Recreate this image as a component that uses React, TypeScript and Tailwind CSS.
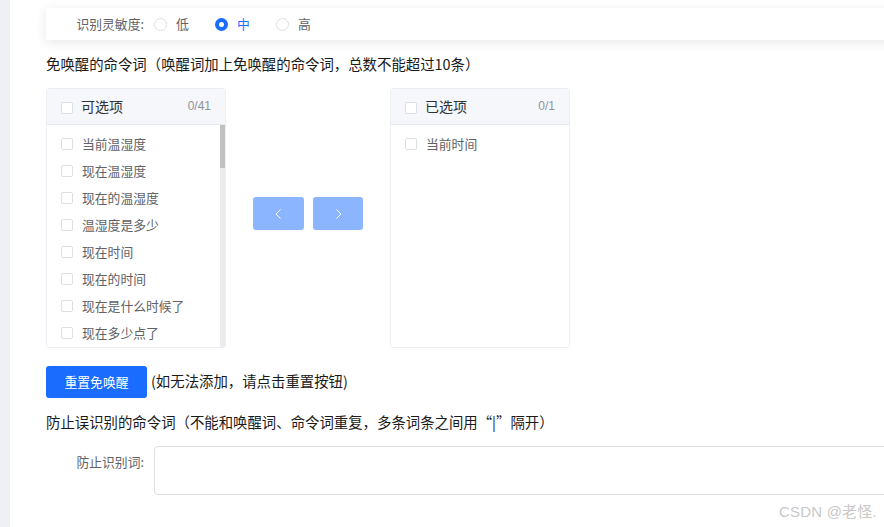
import React from "react";

const items = ["当前温湿度", "现在温湿度", "现在的温湿度", "温湿度是多少", "现在时间", "现在的时间", "现在是什么时候了", "现在多少点了"];

function Box({ className = "" }: { className?: string }) {
  return <span className={`block w-[12px] h-[12px] rounded-[2px] border border-[#dcdfe6] bg-white shrink-0 ${className}`} />;
}

function Radio({ label, on }: { label: string; on?: boolean }) {
  return (
    <div className="flex items-center w-[61px]">
      {on ? (
        <span className="w-[13px] h-[13px] rounded-full border-[4px] border-[#1a6cff] bg-white shrink-0" />
      ) : (
        <span className="w-[13px] h-[13px] rounded-full border border-[#dcdfe6] bg-white shrink-0" />
      )}
      <span className={`ml-[9px] text-[12.8px] ${on ? "text-[#1a6cff]" : "text-[#606266]"}`}>{label}</span>
    </div>
  );
}

function Panel({ title, count, list, scroll }: { title: string; count: string; list: string[]; scroll?: boolean }) {
  return (
    <div className="w-[180px] h-[260px] rounded-[3px] border border-[#ebeef5] bg-white flex flex-col shrink-0 overflow-hidden">
      <div className="h-[36px] shrink-0 bg-[#f5f7fa] border-b border-[#e6e9f0] flex items-center pl-[14px] pr-[14px]">
        <Box className="mt-[2px]" />
        <span className="ml-[8px] text-[14px] text-[#303133] flex-1">{title}</span>
        <span className="text-[12px] text-[#909399] pb-[1px]" style={{ fontFamily: '"Liberation Sans", sans-serif' }}>{count}</span>
      </div>
      <div className="flex-1 flex min-h-0">
        <div className="flex-1 pt-[5px] pl-[14px]">
          {list.map((t) => (
            <div key={t} className="h-[27px] flex items-center">
              <Box />
              <span className="ml-[9px] text-[12.8px] text-[#606266] whitespace-nowrap">{t}</span>
            </div>
          ))}
        </div>
        {scroll && (
          <div className="w-[5px] bg-[#ececec] shrink-0">
            <div className="h-[43px] bg-[#c1c1c1]" />
          </div>
        )}
      </div>
    </div>
  );
}

function Arrow({ d }: { d: string }) {
  return (
    <svg width="12" height="12" viewBox="0 0 12 12" fill="none" stroke="#ffffff" strokeWidth="1">
      <path d={d} />
    </svg>
  );
}

export default function App() {
  return (
    <div
      className="relative w-[884px] h-[527px] overflow-hidden bg-white flex"
      style={{ fontFamily: '"Noto Sans CJK SC", "Liberation Sans", sans-serif' }}
    >
      <div className="w-[10px] bg-[#eef0f6] shrink-0" />
      <div className="pl-[36px] pt-[8px] w-[1000px] shrink-0">
        <div className="h-[32px] w-[950px] bg-white shadow-[0_2px_12px_rgba(0,0,0,0.1)] flex items-center">
          <span className="w-[98px] text-right text-[12.8px] text-[#606266]">识别灵敏度:</span>
          <div className="ml-[10px] flex">
            <Radio label="低" />
            <Radio label="中" on />
            <Radio label="高" />
          </div>
        </div>
        <div className="mt-[14px] h-[20px] leading-[20px] text-[14.4px] text-[#1a1a1a]">
          免唤醒的命令词（唤醒词加上免唤醒的命令词，总数不能超过10条）
        </div>
        <div className="mt-[14px] flex">
          <Panel title="可选项" count="0/41" list={items} scroll />
          <div className="w-[164px] shrink-0 flex items-start pt-[109px] pl-[27px] gap-[9px]">
            <div className="w-[51px] h-[33px] rounded-[3px] bg-[#8cb5ff] flex items-center justify-center">
              <Arrow d="M7.5 1.5 L3 6 L7.5 10.5" />
            </div>
            <div className="w-[50px] h-[33px] rounded-[3px] bg-[#8cb5ff] flex items-center justify-center">
              <Arrow d="M4.5 1.5 L9 6 L4.5 10.5" />
            </div>
          </div>
          <Panel title="已选项" count="0/1" list={["当前时间"]} />
        </div>
        <div className="mt-[18px] flex items-center h-[32px]">
          <div className="w-[101px] h-[32px] rounded-[3px] bg-[#1a6cff] text-white text-[12.8px] flex items-center justify-center pb-[1px]">
            重置免唤醒
          </div>
          <span className="ml-[4px] text-[14.4px] text-[#1a1a1a] pb-[2px]">(如无法添加，请点击重置按钮)</span>
        </div>
        <div className="mt-[14px] h-[20px] leading-[20px] text-[14.4px] text-[#1a1a1a]">
          防止误识别的命令词（不能和唤醒词、命令词重复，多条词条之间用“|”隔开）
        </div>
        <div className="mt-[14px] flex">
          <span className="w-[98px] text-right text-[12.8px] text-[#606266] pt-[6px]">防止识别词:</span>
          <div className="ml-[10px] w-[800px] h-[49px] rounded-[4px] border border-[#dcdfe6] bg-white" />
        </div>
      </div>
      <div
        className="absolute left-[779px] top-[502px] text-[15px] leading-[20px] tracking-[0.2px] text-[#c8c8c8] whitespace-nowrap"
        style={{ fontFamily: '"Liberation Sans", "Noto Sans CJK SC", sans-serif' }}
      >
        CSDN @老怪.
      </div>
    </div>
  );
}
